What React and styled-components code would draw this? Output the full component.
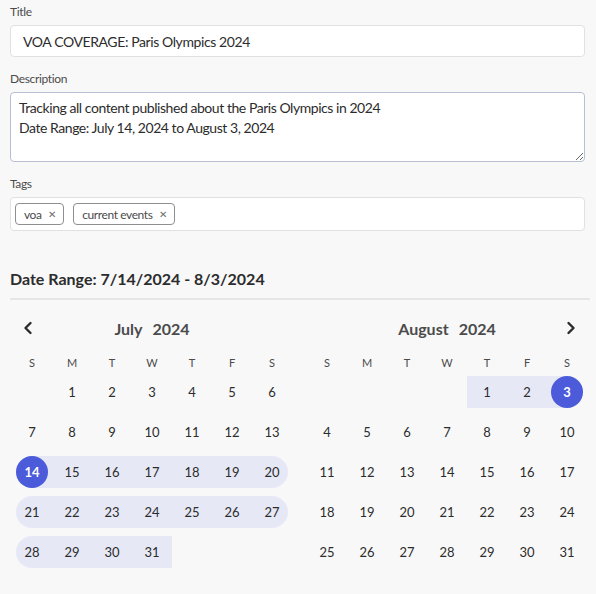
import React from 'react';
import styled, { createGlobalStyle } from 'styled-components';

const GlobalStyle = createGlobalStyle`
  html, body {
    margin: 0;
    padding: 0;
    background: #f8f8f8;
  }
  body {
    font-family: Lato, "Open Sans", sans-serif;
    color: #2c2c2c;
  }
`;

const WEEKDAYS = ['S', 'M', 'T', 'W', 'T', 'F', 'S'];

const RANGE_START = new Date(2024, 6, 14);
const RANGE_END = new Date(2024, 7, 3);

const sameDay = (a, b) =>
  a.getFullYear() === b.getFullYear() &&
  a.getMonth() === b.getMonth() &&
  a.getDate() === b.getDate();

const buildMonth = (year, month) => {
  const first = new Date(year, month, 1).getDay();
  const count = new Date(year, month + 1, 0).getDate();
  const cells = Array(first).fill(null);
  for (let d = 1; d <= count; d++) cells.push(new Date(year, month, d));
  return cells;
};

const Month = ({ year, month, name, prev, next }) => {
  const cells = buildMonth(year, month);
  return (
    <Calendar>
      <Header>
        <NavButton side='left'>
          {prev && (
            <svg width='12' height='14' viewBox='0 0 12 14'>
              <path d='M8.5 2 L3.5 7 L8.5 12' fill='none' stroke='#2c2c2c' strokeWidth='2.4' strokeLinecap='round' strokeLinejoin='round' />
            </svg>
          )}
        </NavButton>
        <MonthTitle>
          <span>{name}</span>
          <span>{year}</span>
        </MonthTitle>
        <NavButton side='right'>
          {next && (
            <svg width='12' height='14' viewBox='0 0 12 14'>
              <path d='M3.5 2 L8.5 7 L3.5 12' fill='none' stroke='#2c2c2c' strokeWidth='2.4' strokeLinecap='round' strokeLinejoin='round' />
            </svg>
          )}
        </NavButton>
      </Header>
      <Grid>
        {WEEKDAYS.map((w, i) => (
          <WeekDay key={i}>{w}</WeekDay>
        ))}
        {cells.map((date, i) => {
          if (!date) return <Cell key={i} />;
          const inRange = date >= RANGE_START && date <= RANGE_END;
          const isStart = sameDay(date, RANGE_START);
          const isEnd = sameDay(date, RANGE_END);
          const wd = date.getDay();
          return (
            <Cell key={i}>
              <Band
                $on={inRange}
                $roundLeft={inRange && (wd === 0 || isStart)}
                $roundRight={inRange && (wd === 6 || isEnd)}
              />
              <Day $selected={isStart || isEnd}>{date.getDate()}</Day>
            </Cell>
          );
        })}
      </Grid>
    </Calendar>
  );
};

export default function App() {
  return (
    <>
      <GlobalStyle />
      <Page>
        <Field>
          <Label>Title</Label>
          <TextInput readOnly value='VOA COVERAGE: Paris Olympics 2024' />
        </Field>
        <Field>
          <Label>Description</Label>
          <TextArea
            readOnly
            value={'Tracking all content published about the Paris Olympics in 2024\nDate Range: July 14, 2024 to August 3, 2024'}
          />
        </Field>
        <Field>
          <Label>Tags</Label>
          <TagBox>
            <Tag>
              voa <Remove>✕</Remove>
            </Tag>
            <Tag>
              current events <Remove>✕</Remove>
            </Tag>
          </TagBox>
        </Field>
        <RangeTitle>Date Range: 7/14/2024 - 8/3/2024</RangeTitle>
        <Calendars>
          <Month year={2024} month={6} name='July' prev />
          <Month year={2024} month={7} name='August' next />
        </Calendars>
      </Page>
    </>
  );
}

const Page = styled.div`
  padding: 4px 11px 0 10px;
`;

const Field = styled.div`
  display: flex;
  flex-direction: column;
  gap: 5px;
  margin-bottom: 14px;
`;

const Label = styled.label`
  font-size: 12px;
  line-height: 16px;
  letter-spacing: -0.35px;
  color: #4b4b4b;
`;

const TextInput = styled.input`
  box-sizing: border-box;
  height: 32px;
  width: 100%;
  padding: 0 12px;
  border: 1px solid #e1e1e1;
  border-radius: 4px;
  background: #fff;
  font-family: inherit;
  font-size: 14px;
  letter-spacing: -0.4px;
  color: #2c2c2c;
  outline: none;
`;

const TextArea = styled.textarea`
  box-sizing: border-box;
  height: 70px;
  width: 100%;
  padding: 5px 8px;
  border: 1px solid #b7bfd3;
  border-radius: 4px;
  background: #fff;
  font-family: inherit;
  font-size: 14px;
  line-height: 20px;
  letter-spacing: -0.45px;
  color: #2c2c2c;
  outline: none;
  resize: vertical;
`;

const TagBox = styled.div`
  box-sizing: border-box;
  height: 34px;
  display: flex;
  align-items: center;
  gap: 9px;
  padding: 0 4px;
  border: 1px solid #e1e1e1;
  border-radius: 4px;
  background: #fff;
`;

const Tag = styled.span`
  box-sizing: border-box;
  height: 22px;
  display: inline-flex;
  align-items: center;
  gap: 6px;
  padding: 0 8px;
  border: 1px solid #8f8f8f;
  border-radius: 4px;
  font-size: 12px;
  letter-spacing: -0.4px;
  color: #4b4b4b;
`;

const Remove = styled.span`
  font-size: 10px;
  color: #6e6e6e;
`;

const RangeTitle = styled.h2`
  margin: 38px -5px 0 0;
  padding-bottom: 9px;
  border-bottom: 2px solid #e6e6e6;
  font-size: 16px;
  line-height: 20px;
  font-weight: 700;
  color: #2c2c2c;
`;

const Calendars = styled.div`
  display: flex;
  gap: 15px;
  margin: 12px 0 0 2px;
`;

const Calendar = styled.div`
  width: 280px;
`;

const Header = styled.div`
  height: 32px;
  display: flex;
  align-items: center;
  justify-content: space-between;
  margin-bottom: 8px;
`;

const NavButton = styled.span`
  width: 32px;
  height: 32px;
  display: flex;
  align-items: center;
  justify-content: ${p => (p.side === 'left' ? 'flex-start' : 'flex-end')};
  padding: 0 10px;
  box-sizing: border-box;
`;

const MonthTitle = styled.div`
  display: flex;
  gap: 10px;
  font-size: 16px;
  font-weight: 700;
  color: #4b4b4b;
`;

const Grid = styled.div`
  display: grid;
  grid-template-columns: repeat(7, 40px);
  grid-auto-rows: 40px;
  grid-template-rows: 20px;
`;

const WeekDay = styled.div`
  display: flex;
  align-items: center;
  justify-content: center;
  font-size: 11px;
  color: #4b4b4b;
`;

const Cell = styled.div`
  position: relative;
  display: flex;
  align-items: center;
  justify-content: center;
`;

const Band = styled.div`
  position: absolute;
  top: 4px;
  bottom: 4px;
  left: ${p => (p.$roundLeft ? '4px' : '0')};
  right: ${p => (p.$roundRight ? '4px' : '0')};
  background: ${p => (p.$on ? '#e6e8f6' : 'transparent')};
  border-radius: ${p => `${p.$roundLeft ? 16 : 0}px ${p.$roundRight ? 16 : 0}px ${p.$roundRight ? 16 : 0}px ${p.$roundLeft ? 16 : 0}px`};
`;

const Day = styled.span`
  position: relative;
  width: 32px;
  height: 32px;
  display: flex;
  align-items: center;
  justify-content: center;
  border-radius: 50%;
  font-size: 13px;
  font-weight: ${p => (p.$selected ? 700 : 400)};
  background: ${p => (p.$selected ? '#4b5bd9' : 'transparent')};
  color: ${p => (p.$selected ? '#fff' : '#2c2c2c')};
`;
